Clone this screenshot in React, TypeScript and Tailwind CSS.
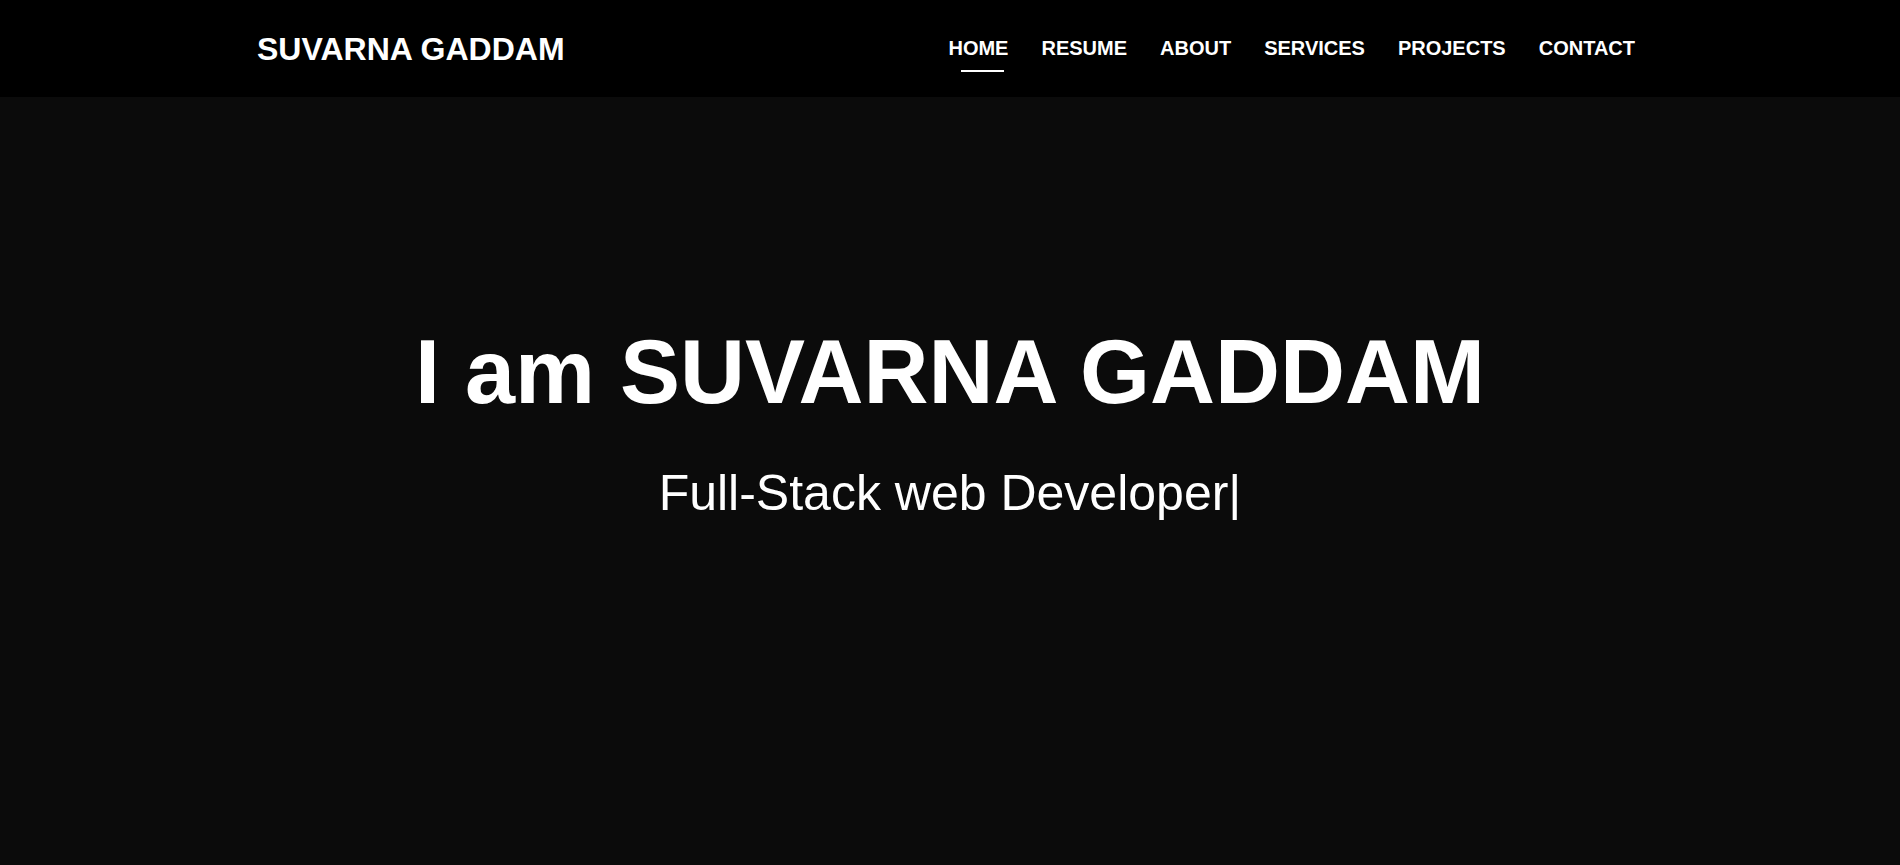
const links = ["HOME", "RESUME", "ABOUT", "SERVICES", "PROJECTS", "CONTACT"];

export default function App() {
  return (
    <div className="min-h-screen bg-[#0b0b0b] text-white font-['Liberation_Sans',Arial,sans-serif]">
      {/* navbar */}
      <header className="h-[97px] bg-black">
        <div className="w-[1386px] mx-auto h-full flex items-center justify-between">
          <div className="text-[32px] font-bold leading-none">SUVARNA GADDAM</div>
          <nav className="flex items-center gap-[33px] pr-[8px] -mt-[2px]">
            {links.map((l, i) => (
              <a key={l} className="relative text-[20px] font-bold leading-none cursor-pointer">
                {l}
                {i === 0 && <span className="absolute left-[13px] top-[32px] w-[43px] h-[2px] bg-white" />}
              </a>
            ))}
          </nav>
        </div>
      </header>

      {/* hero */}
      <main className="flex flex-col items-center pt-[230px] pb-[200px]">
        <h1 className="text-[90px] font-bold leading-none">I am SUVARNA GADDAM</h1>
        <p className="mt-[51px] text-[50px] leading-none">Full-Stack web Developer|</p>
      </main>
    </div>
  );
}
